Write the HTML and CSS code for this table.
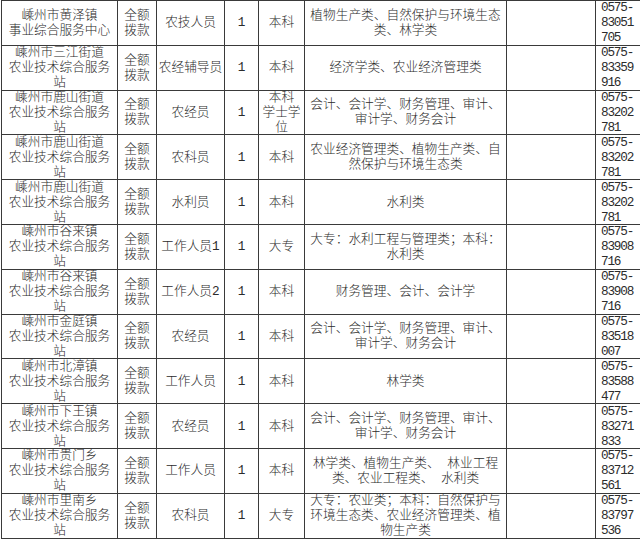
FILE: index.html
```html
<!DOCTYPE html>
<html lang="zh-CN">
<head>
<meta charset="utf-8">
<title>岗位表</title>
<link rel="stylesheet" href="styles.css">
</head>
<body>
<table class="jobs">
  <colgroup>
    <col class="w-unit"><col class="w-fund"><col class="w-post"><col class="w-num"><col class="w-edu"><col class="w-major"><col class="w-blank"><col class="w-tel">
  </colgroup>
  <tbody>
    <tr>
      <td><div class="c">嵊州市黄泽镇<br>事业综合服务中心</div></td>
      <td><div class="c">全额<br>拨款</div></td>
      <td><div class="c">农技人员</div></td>
      <td><div class="c">1</div></td>
      <td><div class="c">本科</div></td>
      <td><div class="c">植物生产类、自然保护与环境生态<br>类、林学类</div></td>
      <td></td>
      <td class="tel"><div class="c">0575-<br>83051<br>705</div></td>
    </tr>
    <tr>
      <td><div class="c">嵊州市三江街道<br>农业技术综合服务<br>站</div></td>
      <td><div class="c">全额<br>拨款</div></td>
      <td><div class="c">农经辅导员</div></td>
      <td><div class="c">1</div></td>
      <td><div class="c">本科</div></td>
      <td><div class="c">经济学类、农业经济管理类</div></td>
      <td></td>
      <td class="tel"><div class="c">0575-<br>83359<br>916</div></td>
    </tr>
    <tr>
      <td><div class="c">嵊州市鹿山街道<br>农业技术综合服务<br>站</div></td>
      <td><div class="c">全额<br>拨款</div></td>
      <td><div class="c">农经员</div></td>
      <td><div class="c">1</div></td>
      <td><div class="c">本科<br>学士学<br>位</div></td>
      <td><div class="c">会计、会计学、财务管理、审计、<br>审计学、财务会计</div></td>
      <td></td>
      <td class="tel"><div class="c">0575-<br>83202<br>781</div></td>
    </tr>
    <tr>
      <td><div class="c">嵊州市鹿山街道<br>农业技术综合服务<br>站</div></td>
      <td><div class="c">全额<br>拨款</div></td>
      <td><div class="c">农科员</div></td>
      <td><div class="c">1</div></td>
      <td><div class="c">本科</div></td>
      <td><div class="c">农业经济管理类、植物生产类、自<br>然保护与环境生态类</div></td>
      <td></td>
      <td class="tel"><div class="c">0575-<br>83202<br>781</div></td>
    </tr>
    <tr>
      <td><div class="c">嵊州市鹿山街道<br>农业技术综合服务<br>站</div></td>
      <td><div class="c">全额<br>拨款</div></td>
      <td><div class="c">水利员</div></td>
      <td><div class="c">1</div></td>
      <td><div class="c">本科</div></td>
      <td><div class="c">水利类</div></td>
      <td></td>
      <td class="tel"><div class="c">0575-<br>83202<br>781</div></td>
    </tr>
    <tr>
      <td><div class="c">嵊州市谷来镇<br>农业技术综合服务<br>站</div></td>
      <td><div class="c">全额<br>拨款</div></td>
      <td><div class="c">工作人员1</div></td>
      <td><div class="c">1</div></td>
      <td><div class="c">大专</div></td>
      <td><div class="c">大专：水利工程与管理类；本科：<br>水利类</div></td>
      <td></td>
      <td class="tel"><div class="c">0575-<br>83908<br>716</div></td>
    </tr>
    <tr>
      <td><div class="c">嵊州市谷来镇<br>农业技术综合服务<br>站</div></td>
      <td><div class="c">全额<br>拨款</div></td>
      <td><div class="c">工作人员2</div></td>
      <td><div class="c">1</div></td>
      <td><div class="c">本科</div></td>
      <td><div class="c">财务管理、会计、会计学</div></td>
      <td></td>
      <td class="tel"><div class="c">0575-<br>83908<br>716</div></td>
    </tr>
    <tr>
      <td><div class="c">嵊州市金庭镇<br>农业技术综合服务<br>站</div></td>
      <td><div class="c">全额<br>拨款</div></td>
      <td><div class="c">农经员</div></td>
      <td><div class="c">1</div></td>
      <td><div class="c">本科</div></td>
      <td><div class="c">会计、会计学、财务管理、审计、<br>审计学、财务会计</div></td>
      <td></td>
      <td class="tel"><div class="c">0575-<br>83518<br>007</div></td>
    </tr>
    <tr>
      <td><div class="c">嵊州市北漳镇<br>农业技术综合服务<br>站</div></td>
      <td><div class="c">全额<br>拨款</div></td>
      <td><div class="c">工作人员</div></td>
      <td><div class="c">1</div></td>
      <td><div class="c">本科</div></td>
      <td><div class="c">林学类</div></td>
      <td></td>
      <td class="tel"><div class="c">0575-<br>83588<br>477</div></td>
    </tr>
    <tr>
      <td><div class="c">嵊州市下王镇<br>农业技术综合服务<br>站</div></td>
      <td><div class="c">全额<br>拨款</div></td>
      <td><div class="c">农经员</div></td>
      <td><div class="c">1</div></td>
      <td><div class="c">本科</div></td>
      <td><div class="c">会计、会计学、财务管理、审计、<br>审计学、财务会计</div></td>
      <td></td>
      <td class="tel"><div class="c">0575-<br>83271<br>833</div></td>
    </tr>
    <tr>
      <td><div class="c">嵊州市贵门乡<br>农业技术综合服务<br>站</div></td>
      <td><div class="c">全额<br>拨款</div></td>
      <td><div class="c">工作人员</div></td>
      <td><div class="c">1</div></td>
      <td><div class="c">本科</div></td>
      <td><div class="c">林学类、植物生产类、 林业工程<br>类、农业工程类、 水利类</div></td>
      <td></td>
      <td class="tel"><div class="c">0575-<br>83712<br>561</div></td>
    </tr>
    <tr>
      <td><div class="c">嵊州市里南乡<br>农业技术综合服务<br>站</div></td>
      <td><div class="c">全额<br>拨款</div></td>
      <td><div class="c">农科员</div></td>
      <td><div class="c">1</div></td>
      <td><div class="c">大专</div></td>
      <td><div class="c">大专：农业类；本科：自然保护与<br>环境生态类、农业经济管理类、植<br>物生产类</div></td>
      <td></td>
      <td class="tel"><div class="c">0575-<br>83797<br>536</div></td>
    </tr>
  </tbody>
</table>
</body>
</html>
```

FILE: styles.css
```css
html, body {
  margin: 0;
  padding: 0;
  background: #ffffff;
  overflow: hidden;
}

.jobs {
  margin-left: 1px;
  border-collapse: collapse;
  table-layout: fixed;
  width: 644px;
  font-family: "Liberation Mono", "Noto Sans CJK SC", monospace;
  font-size: 12.7px;
  font-weight: 300;
  color: #2b2b2b;
}

.w-unit { width: 116px; }
.w-fund { width: 39px; }
.w-post { width: 68px; }
.w-num { width: 34px; }
.w-edu { width: 46px; }
.w-major { width: 202px; }
.w-blank { width: 89px; }
.w-tel { width: 50px; }

.jobs tr {
  height: 44.8px;
}

.jobs td {
  border: 1px solid #3a3a3a;
  padding: 0 1px;
  text-align: center;
  vertical-align: middle;
  white-space: nowrap;
  overflow: hidden;
}

.c {
  line-height: 15px;
  margin: -2px 0;
}

.tel .c {
  letter-spacing: -1.2px;
  text-align: left;
  padding-left: 4px;
}
```
